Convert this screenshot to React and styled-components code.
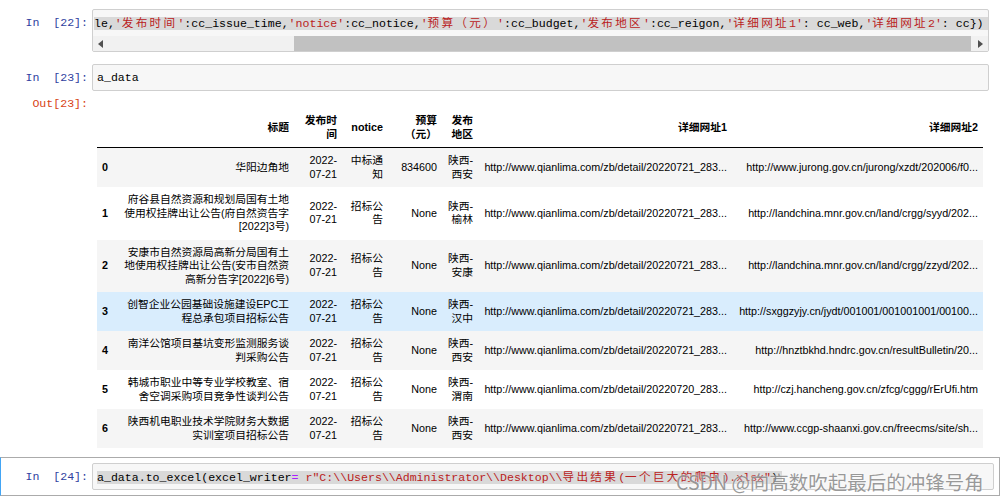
import React, { Fragment } from "react";
import styled, { createGlobalStyle } from "styled-components";

const MONO = `"Liberation Mono", "Noto Sans CJK SC", monospace`;
const SANS = `"Liberation Sans", "Noto Sans CJK SC", sans-serif`;

const GlobalStyle = createGlobalStyle`
  html, body {
    margin: 0;
    padding: 0;
    background: #fff;
  }
  body {
    width: 1000px;
    height: 500px;
    overflow: hidden;
  }
`;

const columns = [
  { key: "idx", label: [""], width: 20 },
  { key: "title", label: ["标题"], width: 177 },
  { key: "date", label: ["发布时", "间"], width: 48 },
  { key: "notice", label: ["notice"], width: 46 },
  { key: "budget", label: ["预算", "（元）"], width: 54 },
  { key: "region", label: ["发布", "地区"], width: 36 },
  { key: "url1", label: ["详细网址1"], width: 254 },
  { key: "url2", label: ["详细网址2"], width: 251 },
];

const date = ["2022-", "07-21"];
const bid = ["招标公", "告"];
const q = (d) => `http://www.qianlima.com/zb/detail/${d}_283...`;

const rows = [
  {
    title: ["华阳边角地"],
    notice: ["中标通", "知"],
    budget: "834600",
    region: ["陕西-", "西安"],
    url1: q("20220721"),
    url2: "http://www.jurong.gov.cn/jurong/xzdt/202006/f0...",
  },
  {
    title: ["府谷县自然资源和规划局国有土地", "使用权挂牌出让公告(府自然资告字", "[2022]3号)"],
    region: ["陕西-", "榆林"],
    url1: q("20220721"),
    url2: "http://landchina.mnr.gov.cn/land/crgg/syyd/202...",
  },
  {
    title: ["安康市自然资源局高新分局国有土", "地使用权挂牌出让公告(安市自然资", "高新分告字[2022]6号)"],
    region: ["陕西-", "安康"],
    url1: q("20220721"),
    url2: "http://landchina.mnr.gov.cn/land/crgg/zzyd/202...",
  },
  {
    title: ["创智企业公园基础设施建设EPC工", "程总承包项目招标公告"],
    region: ["陕西-", "汉中"],
    url1: q("20220721"),
    url2: "http://sxggzyjy.cn/jydt/001001/001001001/00100...",
    hovered: true,
  },
  {
    title: ["南洋公馆项目基坑变形监测服务谈", "判采购公告"],
    region: ["陕西-", "西安"],
    url1: q("20220721"),
    url2: "http://hnztbkhd.hndrc.gov.cn/resultBulletin/20...",
  },
  {
    title: ["韩城市职业中等专业学校教室、宿", "舍空调采购项目竞争性谈判公告"],
    region: ["陕西-", "渭南"],
    url1: q("20220720"),
    url2: "http://czj.hancheng.gov.cn/zfcg/cggg/rErUfi.htm",
  },
  {
    title: ["陕西机电职业技术学院财务大数据", "实训室项目招标公告"],
    region: ["陕西-", "西安"],
    url1: q("20220721"),
    url2: "http://www.ccgp-shaanxi.gov.cn/freecms/site/sh...",
  },
];

// code tokens: n = plain, s = string, o = operator
const cell22 = [
  ["n", "le,"], ["s", "'发布时间'"], ["n", ":cc_issue_time,"], ["s", "'notice'"],
  ["n", ":cc_notice,"], ["s", "'预算（元）'"], ["n", ":cc_budget,"], ["s", "'发布地区'"],
  ["n", ":cc_reigon,"], ["s", "'详细网址1'"], ["n", ": cc_web,"], ["s", "'详细网址2'"],
  ["n", ": cc})"],
];

const cell23 = [["n", "a_data"]];

const cell24 = [
  ["n", "a_data.to_excel(excel_writer"], ["o", "="], ["n", " "],
  ["s", String.raw`r"C:\\Users\\Administrator\\Desktop\\导出结果(一个巨大的爬虫).xlsx"`],
  ["n", ")"],
];

const Page = styled.div`
  position: relative;
  width: 1000px;
  height: 500px;
  overflow: hidden;
  padding-top: 3px;
  box-sizing: border-box;
`;

const Cell = styled.div`
  display: flex;
  flex-direction: column;
  border: 1px solid ${(p) => (p.$selected ? "#ababab" : "transparent")};
  border-left-color: ${(p) => (p.$selected ? "#42a5f5" : "transparent")};
  padding: 5px ${(p) => (p.$selected ? 5 : 10)}px 5px 0;
`;

const Row = styled.div`
  display: flex;
`;

const Prompt = styled.div`
  width: 91px;
  flex-shrink: 0;
  box-sizing: border-box;
  padding: ${(p) => (p.$out ? 5 : 6)}px 4px 0 0;
  text-align: right;
  font-family: ${MONO};
  font-size: 11.58px;
  line-height: 15px;
  white-space: pre;
  color: ${(p) => (p.$out ? "#d84315" : "#303f9f")};
`;

const InputArea = styled.div`
  flex: 1;
  min-width: 0;
  border: 1px solid #cfcfcf;
  border-radius: 2px;
  background: #f7f7f7;
  padding: 5px 0 ${(p) => (p.$scroll ? 0 : 5)}px;
  overflow: hidden;
`;

const CodeLine = styled.div`
  height: 15px;
  overflow: hidden;
  padding-left: ${(p) => (p.$scrolled ? 1 : 4)}px;
  font-family: ${MONO};
  font-size: 11.58px;
  line-height: 15px;
  white-space: pre;
  color: #000;
`;

const Selection = styled.span`
  background: ${(p) => (p.$on ? "#d9d9d9" : "transparent")};
  padding-right: 4px;
`;

const Token = styled.span`
  color: ${(p) => (p.$kind === "s" ? "#ba2121" : p.$kind === "o" ? "#aa22ff" : "#000")};
`;

const Wide = styled.span`
  font-family: "Noto Sans CJK SC", sans-serif;
  letter-spacing: 2.32px;
`;

const Scrollbar = styled.div`
  display: flex;
  height: 15px;
  margin-top: 6px;
  background: #f1f1f1;
`;

const ArrowButton = styled.div`
  width: 15px;
  flex-shrink: 0;
  display: flex;
  align-items: center;
  justify-content: center;
`;

const Track = styled.div`
  flex: 1;
  display: flex;
  padding: 0 ${(p) => p.$after}px 0 ${(p) => p.$before}px;
`;

const Thumb = styled.div`
  flex: 1;
  background: #c1c1c1;
`;

const OutputContent = styled.div`
  flex: 1;
  padding: 17px 0 3px 5px;
`;

const Table = styled.table`
  border-collapse: collapse;
  border-spacing: 0;
  table-layout: fixed;
  width: 886px;
  font-family: ${SANS};
  font-size: 10.76px;
  line-height: 13.5px;
  color: #000;
`;

const HeadCell = styled.th`
  padding: 6px 5px;
  text-align: right;
  vertical-align: middle;
  white-space: nowrap;
  font-weight: bold;
  border-bottom: 1px solid #000;
`;

const BodyRow = styled.tr`
  background: ${(p) => (p.$hovered ? "#d9edfd" : p.$odd ? "#f5f5f5" : "#fff")};
`;

const IndexCell = styled.th`
  padding: 6px 5px;
  text-align: left;
  vertical-align: middle;
  font-weight: bold;
`;

const DataCell = styled.td`
  padding: 6px 5px;
  text-align: right;
  vertical-align: middle;
  white-space: nowrap;
  overflow: hidden;
`;

const Watermark = styled.div`
  position: absolute;
  left: 676px;
  top: 471px;
  font-family: "Noto Sans CJK SC", sans-serif;
  font-size: 19.5px;
  line-height: 22px;
  white-space: nowrap;
  color: rgba(120, 120, 120, 0.75);
  text-shadow: 0 0 2px #fff;
  pointer-events: none;
`;

const cjk = /([\u3000-\u303f\u4e00-\u9fff\uff00-\uffef]+)/;

const renderText = (text) =>
  text.split(cjk).map((part, i) =>
    i % 2 === 1 ? <Wide key={i}>{part}</Wide> : <Fragment key={i}>{part}</Fragment>
  );

const Code = ({ tokens, scrolled, selected }) => (
  <CodeLine $scrolled={scrolled}>
    <Selection $on={selected}>
      {tokens.map(([kind, text], i) => (
        <Token key={i} $kind={kind}>
          {renderText(text)}
        </Token>
      ))}
    </Selection>
  </CodeLine>
);

const Lines = ({ lines }) =>
  [].concat(lines).map((line, i) => (
    <Fragment key={i}>
      {i > 0 && <br />}
      {line}
    </Fragment>
  ));

const Arrow = ({ dir }) => (
  <svg width="5" height="8" viewBox="0 0 5 8">
    <path d={dir === "left" ? "M5 0 L0 4 L5 8 Z" : "M0 0 L5 4 L0 8 Z"} fill="#505050" />
  </svg>
);

const DataFrame = () => (
  <Table>
    <colgroup>
      {columns.map((c) => (
        <col key={c.key} style={{ width: c.width }} />
      ))}
    </colgroup>
    <thead>
      <tr>
        {columns.map((c) => (
          <HeadCell key={c.key}>
            <Lines lines={c.label} />
          </HeadCell>
        ))}
      </tr>
    </thead>
    <tbody>
      {rows.map((r, i) => (
        <BodyRow key={i} $odd={i % 2 === 0} $hovered={r.hovered}>
          <IndexCell>{i}</IndexCell>
          <DataCell><Lines lines={r.title} /></DataCell>
          <DataCell><Lines lines={date} /></DataCell>
          <DataCell><Lines lines={r.notice || bid} /></DataCell>
          <DataCell>{r.budget || "None"}</DataCell>
          <DataCell><Lines lines={r.region} /></DataCell>
          <DataCell>{r.url1}</DataCell>
          <DataCell>{r.url2}</DataCell>
        </BodyRow>
      ))}
    </tbody>
  </Table>
);

export default function App() {
  return (
    <Page>
      <GlobalStyle />
      <Cell>
        <Row>
          <Prompt>In  [22]:</Prompt>
          <InputArea $scroll>
            <Code tokens={cell22} scrolled selected />
            <Scrollbar>
              <ArrowButton><Arrow dir="left" /></ArrowButton>
              <Track $before={186} $after={2}>
                <Thumb />
              </Track>
              <ArrowButton><Arrow dir="right" /></ArrowButton>
            </Scrollbar>
          </InputArea>
        </Row>
      </Cell>
      <Cell>
        <Row>
          <Prompt>In  [23]:</Prompt>
          <InputArea>
            <Code tokens={cell23} />
          </InputArea>
        </Row>
        <Row>
          <Prompt $out>Out[23]:</Prompt>
          <OutputContent>
            <DataFrame />
          </OutputContent>
        </Row>
      </Cell>
      <Cell $selected>
        <Row>
          <Prompt>In  [24]:</Prompt>
          <InputArea>
            <Code tokens={cell24} selected />
          </InputArea>
        </Row>
      </Cell>
      <Watermark>CSDN @向高数吹起最后的冲锋号角</Watermark>
    </Page>
  );
}
